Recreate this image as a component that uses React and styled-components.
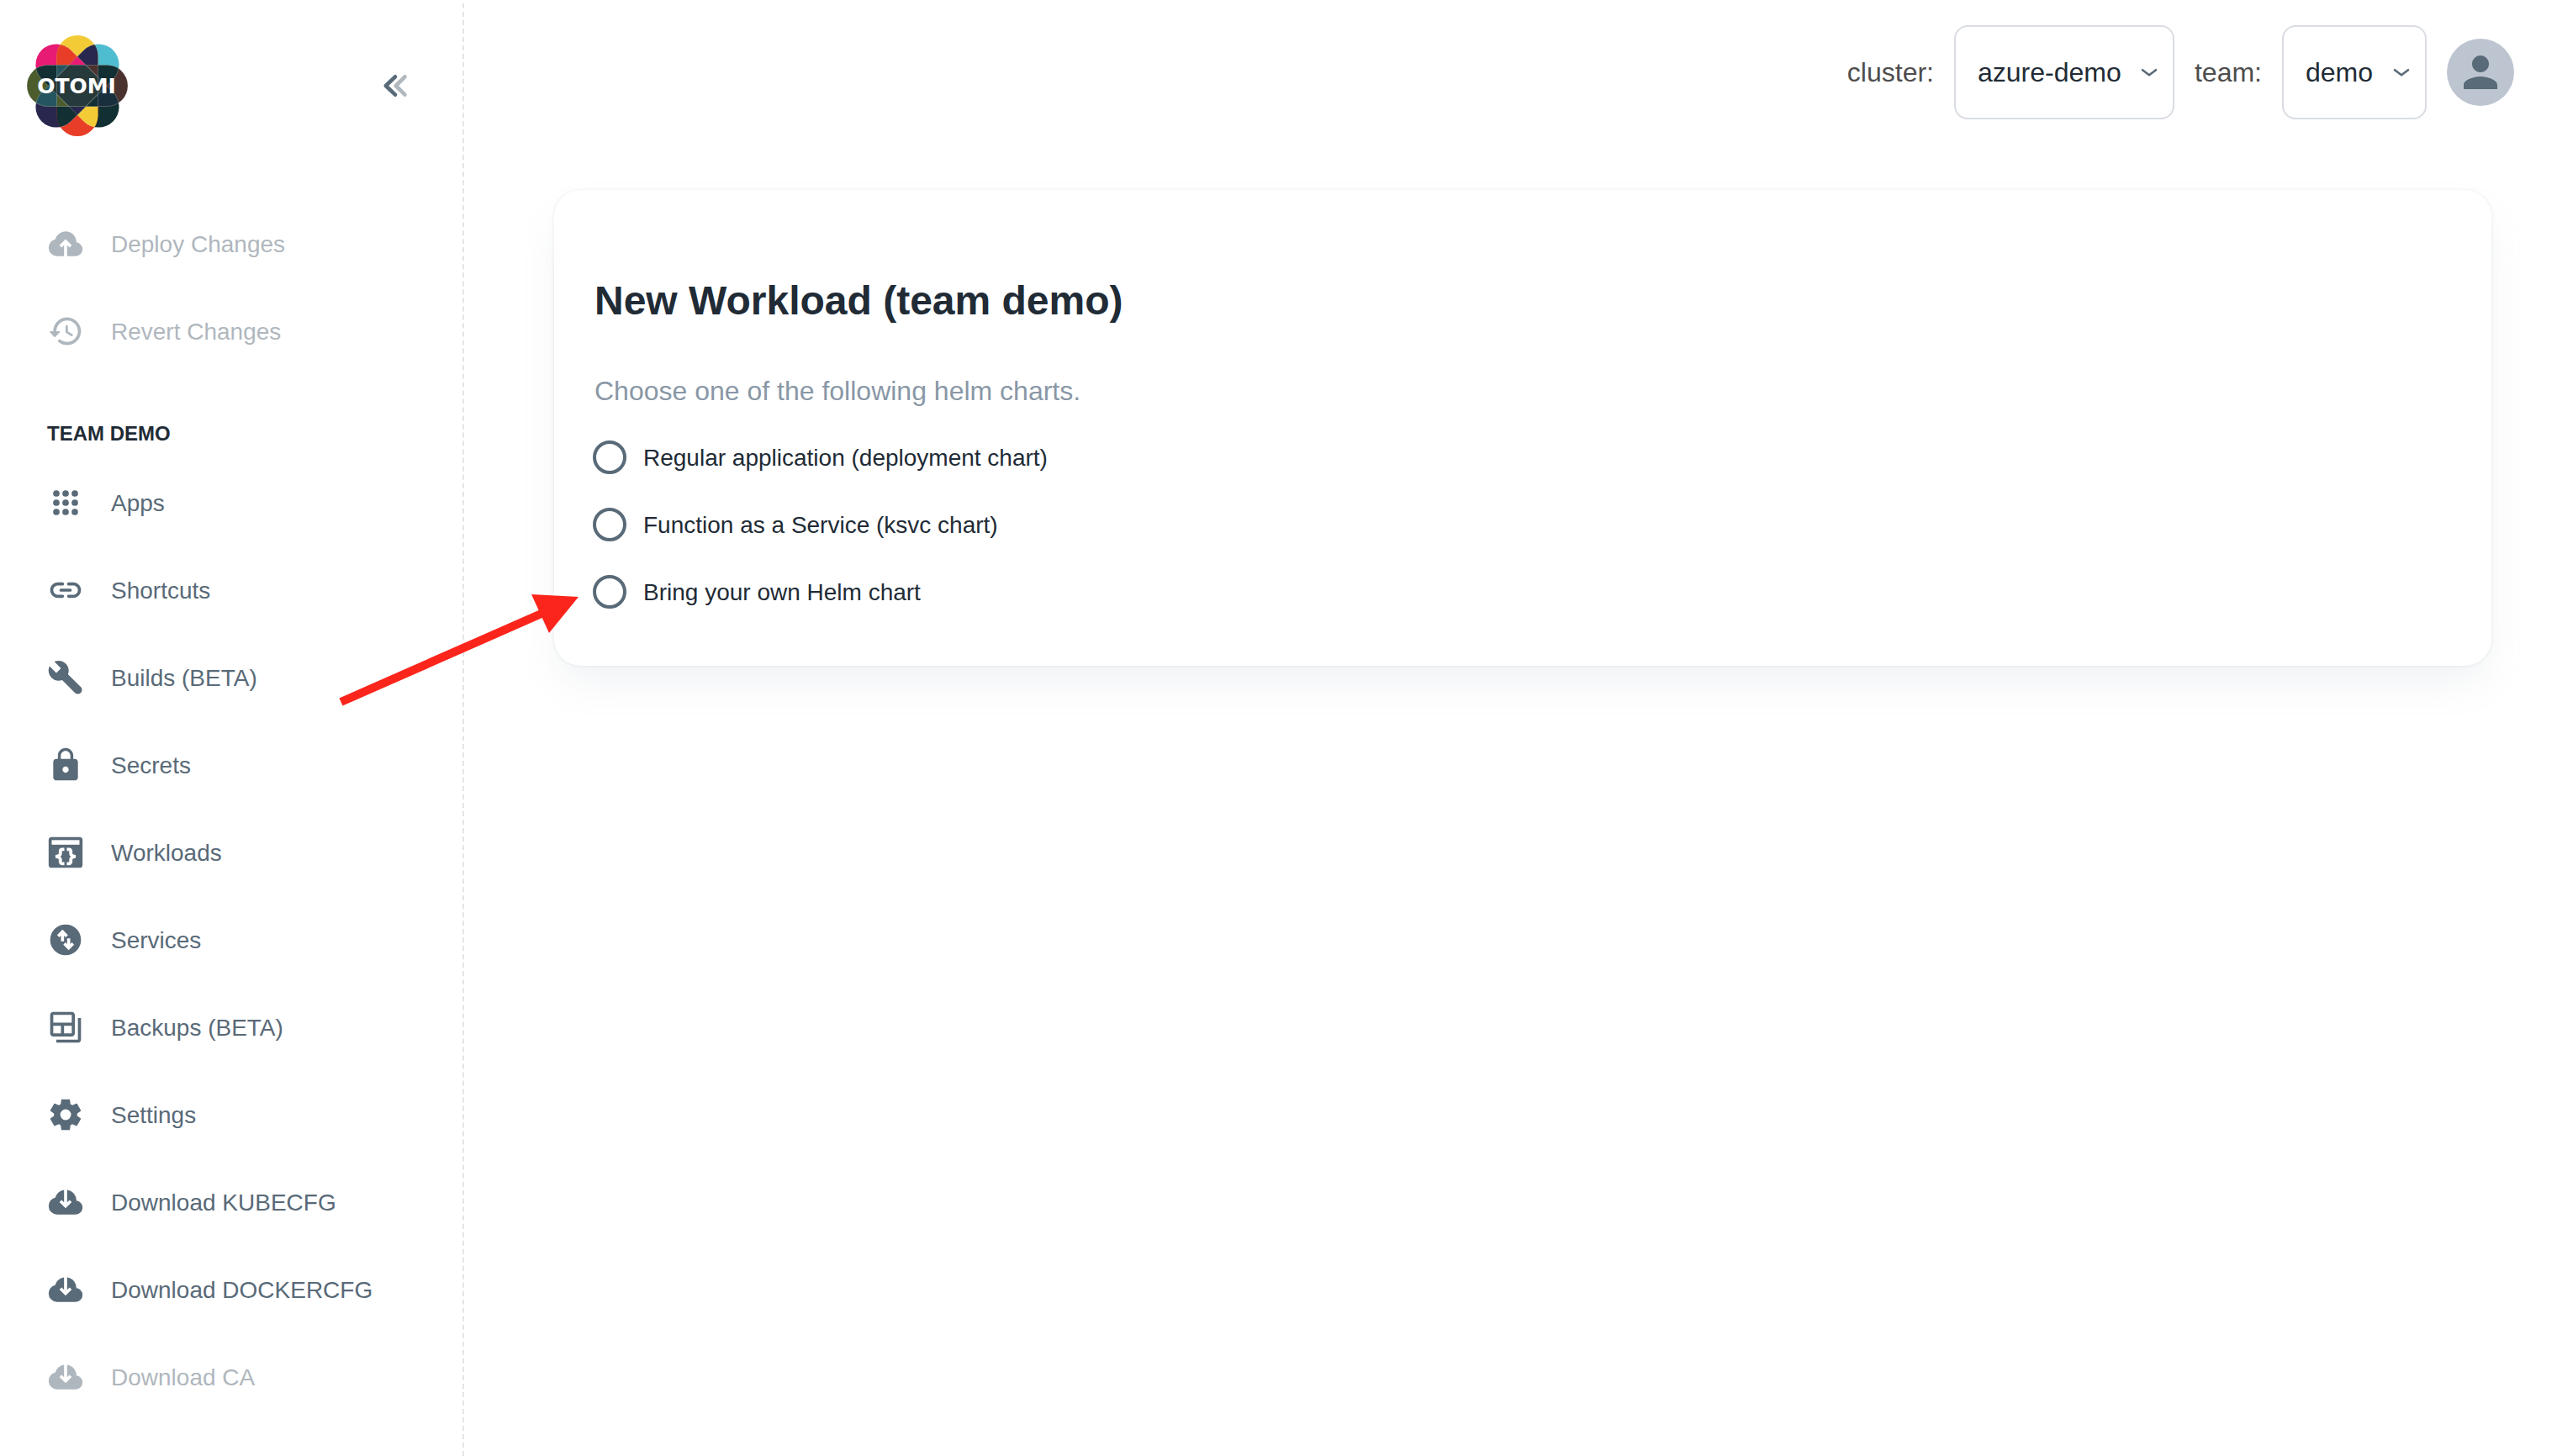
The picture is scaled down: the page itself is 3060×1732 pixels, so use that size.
import React from 'react';
import styled, { createGlobalStyle, css } from 'styled-components';
import { MdLock, MdPerson } from 'react-icons/md';

const colors = {
  primary: '#212b36',
  secondary: '#596a78',
  muted: '#8997a6',
  header: '#4d4d4d',
  border: '#d9dde3',
  avatar: '#bdc5d0',
  arrow: '#fc251c',
};

const GlobalStyle = createGlobalStyle`
  *, *::before, *::after { box-sizing: border-box; }
  body {
    margin: 0;
    background: #fff;
    color: ${colors.primary};
    font-family: "Liberation Sans", Arial, Helvetica, sans-serif;
    font-size: 28px;
  }
  button, select, input { font: inherit; margin: 0; }
`;

const Page = styled.div`
  position: relative;
  display: flex;
  min-height: 100vh;
`;

/* ---------- sidebar ---------- */

const Sidebar = styled.aside`
  flex: 0 0 552px;
  margin-top: 4px;
  padding: 38px 32px 32px;
  border-right: 2px dashed #e2e5e9;
`;

const Brand = styled.div`
  display: flex;
  align-items: center;
  justify-content: space-between;
  padding-right: 24px;
  margin-bottom: 80px;
`;

const LogoLink = styled.a`
  display: block;
  height: 120px;
`;

const CollapseButton = styled.button`
  display: flex;
  width: 48px;
  height: 48px;
  padding: 0;
  border: 0;
  background: none;
  color: ${colors.secondary};
  cursor: pointer;
`;

const NavList = styled.ul`
  display: flex;
  flex-direction: column;
  gap: 8px;
  margin: 0;
  padding: 0;
  list-style: none;
`;

const NavTitle = styled.h2`
  margin: 0;
  padding: 56px 24px 16px;
  font-size: 24px;
  line-height: 36px;
  font-weight: 700;
  text-transform: uppercase;
`;

const navItem = css`
  display: flex;
  align-items: center;
  gap: 32px;
  width: 100%;
  height: 96px;
  padding: 0 24px;
  border: 0;
  border-radius: 16px;
  background: none;
  color: ${colors.secondary};
  text-align: left;
  text-decoration: none;
  white-space: nowrap;
`;

const NavLink = styled.a`
  ${navItem}
`;

const NavButton = styled.button`
  ${navItem}
  &:disabled { opacity: 0.48; }
`;

const NavIcon = styled.span`
  display: flex;
  flex: none;
  svg { width: 44px; height: 44px; }
`;

const ItemText = styled.span`
  padding-top: 2px;
  font-size: 28px;
  line-height: 44px;
`;

/* ---------- header ---------- */

const Main = styled.div`
  flex: 1;
  min-width: 0;
`;

const Header = styled.header`
  display: flex;
  align-items: center;
  justify-content: flex-end;
  gap: 24px;
  padding: 30px 70px 0 0;
`;

const HeaderLabel = styled.label`
  color: ${colors.header};
  font-size: 32px;
  line-height: 48px;
`;

const SelectBox = styled.div`
  display: grid;
  align-items: center;
  > * { grid-area: 1 / 1; }
  > svg {
    justify-self: end;
    margin-right: 20px;
    pointer-events: none;
  }
`;

const Select = styled.select`
  appearance: none;
  height: 112px;
  padding: 0 61px 0 26px;
  border: 2px solid ${colors.border};
  border-radius: 16px;
  background: transparent;
  color: ${colors.primary};
  font-size: 32px;
`;

const Avatar = styled.button`
  display: flex;
  align-items: center;
  justify-content: center;
  width: 80px;
  height: 80px;
  padding: 0;
  border: 0;
  border-radius: 50%;
  background: ${colors.avatar};
  color: ${colors.secondary};
  svg { width: 60px; height: 60px; }
`;

/* ---------- content ---------- */

const Container = styled.main`
  max-width: 2410px;
  margin: 0 auto;
  padding: 84px 48px 48px 58px;
`;

const Card = styled.section`
  padding: 96px 48px 48px;
  border-radius: 32px;
  background: #fff;
  box-shadow: 0 0 4px rgba(145, 158, 171, 0.2), 0 24px 48px -8px rgba(145, 158, 171, 0.14);
`;

const Title = styled.h1`
  margin: 0 0 48px;
  font-size: 48px;
  line-height: 72px;
  font-weight: 700;
`;

const Choices = styled.fieldset`
  margin: 0;
  padding: 0;
  border: 0;
`;

const Legend = styled.legend`
  margin-bottom: 16px;
  padding: 0;
  color: ${colors.muted};
  font-size: 32px;
  line-height: 46px;
`;

const Choice = styled.label`
  display: flex;
  align-items: center;
  gap: 20px;
  width: max-content;
  height: 80px;
  margin-left: -2px;
`;

const Radio = styled.input`
  appearance: none;
  flex: none;
  width: 40px;
  height: 40px;
  border: 4px solid ${colors.secondary};
  border-radius: 50%;
  background: #fff;
  &:checked { background: radial-gradient(${colors.secondary} 10px, #fff 11px); }
`;

/* Red pointer laid over the sidebar edge and the card */
const Pointer = styled.svg`
  position: absolute;
  left: 400px;
  top: 704px;
  width: 292px;
  height: 140px;
  pointer-events: none;
`;

/* ---------- drawings ---------- */

const Pill = ({ turn = 0, ...rest }) => (
  <rect x="35.5" y="0" width="49" height="120" rx="24.5" transform={`rotate(${turn} 60 60)`} {...rest} />
);

const TURNS = { v: 0, a: -45, b: 45, h: 90 };

const Overlap = ({ of, first, second, sideways }) => {
  const halves = sideways ? (
    <>
      <rect width="60" height="120" fill={first} />
      <rect x="60" width="60" height="120" fill={second} />
    </>
  ) : (
    <>
      <rect width="120" height="60" fill={first} />
      <rect y="60" width="120" height="60" fill={second} />
    </>
  );
  return [...of].reduce((inner, key) => <g clipPath={`url(#pill-${key})`}>{inner}</g>, halves);
};

const Logo = () => (
  <svg width="120" height="120" viewBox="0 0 120 120" role="img" aria-label="Otomi">
    <defs>
      {Object.entries(TURNS).map(([key, turn]) => (
        <clipPath id={`pill-${key}`} key={key}>
          <Pill turn={turn} />
        </clipPath>
      ))}
    </defs>
    <Overlap of="a" first="#e71b73" second="#122f33" />
    <Overlap of="b" first="#4fbdd0" second="#29274d" />
    <Overlap of="v" first="#f3cb37" second="#e83e28" />
    <Overlap of="va" first="#e83e28" second="#f3cb37" />
    <Overlap of="vb" first="#29274d" second="#122f33" />
    <Overlap of="vab" first="#e71b73" second="#29274d" />
    <Overlap of="h" first="#4c5c2d" second="#4a332f" sideways />
    <Overlap of="ha" first="#122f33" second="#1a2f3e" />
    <Overlap of="hb" first="#122f33" second="#255660" />
    <Overlap of="hva" first="#255660" second="#122f33" />
    <Overlap of="hvb" first="#4a332f" second="#4c5c2d" />
    <Overlap of="hab" first="#26393b" second="#26393b" />
    <g fill="none" stroke="#fff" strokeOpacity="0.3" strokeWidth="0.7">
      <Pill turn={90} />
      <g clipPath="url(#pill-h)">
        <Pill />
        <Pill turn={45} />
        <Pill turn={-45} />
      </g>
      <g clipPath="url(#pill-v)">
        <Pill turn={45} />
        <Pill turn={-45} />
      </g>
    </g>
    <text x="59" y="69" textAnchor="middle" fill="#fff" fontFamily="'DejaVu Sans', sans-serif" fontWeight="700" fontSize="25">
      OTOMI
    </text>
  </svg>
);

const CollapseIcon = () => (
  <svg width="48" height="48" viewBox="0 0 48 48" fill="none" stroke="currentColor" strokeWidth="4.6" strokeLinecap="round" strokeLinejoin="round" aria-hidden="true">
    <path d="M24 13.300 12.800 24 24 34.700" />
    <path d="M35.500 13.300 24.800 24 35.500 34.700" opacity="0.48" />
  </svg>
);

const ChevronIcon = () => (
  <svg width="20" height="12" viewBox="0 0 20 12" fill="none" stroke={colors.secondary} strokeWidth="2.600" strokeLinecap="round" strokeLinejoin="round" aria-hidden="true">
    <path d="M2 3.200 10 9.200 18 3.200" />
  </svg>
);

const Glyph = ({ d, children }) => (
  <svg viewBox="0 0 24 24" fill="currentColor" aria-hidden="true">
    {d && <path d={d} />}
    {children}
  </svg>
);

const PATHS = {
  upload:
    'M11 20H6.5q-2.275 0-3.887-1.575T1 14.575q0-1.95 1.175-3.475T5.25 9.15q.625-2.3 2.5-3.725T12 4q2.925 0 4.963 2.038T19 11q1.725.2 2.863 1.488T23 15.5q0 1.875-1.312 3.188T18.5 20H13v-7.15l1.6 1.55L16 13l-4-4l-4 4l1.4 1.4l1.6-1.55z',
  download:
    'M6.5 20q-2.275 0-3.887-1.575T1 14.575q0-1.95 1.175-3.475T5.25 9.15q.575-2.025 2.138-3.4T11 4.1v8.05l-1.6-1.55L8 12l4 4l4-4l-1.4-1.4l-1.6 1.55V4.1q2.575.35 4.288 2.313T19 11q1.725.2 2.863 1.488T23 15.5q0 1.875-1.312 3.188T18.5 20z',
  history:
    'M13.26 3C8.17 2.86 4 6.95 4 12H2.21c-.45 0-.67.54-.35.85l2.79 2.8c.2.2.51.2.71 0l2.79-2.8a.5.5 0 0 0-.36-.85H6c0-3.9 3.18-7.05 7.1-7c3.72.05 6.85 3.18 6.9 6.9c.05 3.91-3.1 7.1-7 7.1c-1.61 0-3.1-.55-4.28-1.48a.994.994 0 0 0-1.32.08c-.42.42-.39 1.13.08 1.49A8.858 8.858 0 0 0 13 21c5.05 0 9.14-4.17 9-9.26c-.13-4.69-4.05-8.61-8.74-8.74m-.51 5c-.41 0-.75.34-.75.75v3.68c0 .35.19.68.49.86l3.12 1.85c.36.21.82.09 1.03-.26c.21-.36.09-.82-.26-1.03l-2.88-1.71v-3.4c0-.4-.34-.74-.75-.74',
  link:
    'M17 7h-3c-.55 0-1 .45-1 1s.45 1 1 1h3c1.65 0 3 1.35 3 3s-1.35 3-3 3h-3c-.55 0-1 .45-1 1s.45 1 1 1h3c2.76 0 5-2.24 5-5s-2.24-5-5-5m-9 5c0 .55.45 1 1 1h6c.55 0 1-.45 1-1s-.45-1-1-1H9c-.55 0-1 .45-1 1m2 3H7c-1.65 0-3-1.35-3-3s1.35-3 3-3h3c.55 0 1-.45 1-1s-.45-1-1-1H7c-2.76 0-5 2.24-5 5s2.24 5 5 5h3c.55 0 1-.45 1-1s-.45-1-1-1',
  build:
    'M21.9 18.200l-8.300-8.300c.9-2.300.4-5-1.500-6.900-2-2-5-2.400-7.400-1.300L9 6 6 9 1.600 4.700C.4 7.100.9 10.100 2.900 12.100c1.900 1.900 4.600 2.400 6.900 1.500l8.300 8.300a2.650 2.650 0 0 0 3.800-3.700z',
  backup:
    'M20 6v14H6v2h14c1.100 0 2-.9 2-2V6zm-4-4H4c-1.100 0-2 .9-2 2v12c0 1.100.9 2 2 2h12c1.100 0 2-.9 2-2V4c0-1.100-.9-2-2-2M9 16H4v-5h5zm7 0h-5v-5h5zm0-7H4V4h12z',
  settings:
    'm9.25 22l-.4-3.2q-.325-.125-.612-.3t-.563-.375L4.7 19.375l-2.75-4.75l2.575-1.95Q4.500 12.500 4.500 12.338v-.675q0-.163.025-.338L1.950 9.375l2.750-4.750l2.975 1.250q.275-.2.575-.375t.6-.3l.4-3.200h5.500l.4 3.200q.325.125.613.3t.562.375l2.975-1.250l2.750 4.750l-2.575 1.950q.025.175.025.338v.674q0 .163-.05.338l2.575 1.950l-2.750 4.750l-2.950-1.250q-.275.2-.575.375t-.6.3l-.4 3.200zm2.800-6.500q1.450 0 2.475-1.025T15.550 12t-1.025-2.475T12.050 8.500q-1.475 0-2.488 1.025T8.550 12t1.013 2.475T12.050 15.500',
};

const AppsIcon = () => (
  <Glyph>
    {[6, 12, 18].map((y) => [6, 12, 18].map((x) => <circle key={`${x}-${y}`} cx={x} cy={y} r="2.100" />))}
  </Glyph>
);

const WorkloadsIcon = () => (
  <Glyph>
    <rect x="1" y="2" width="22" height="20" rx="2" />
    <rect x="3" y="4" width="18" height="3" fill="#fff" />
    <g fill="none" stroke="#fff" strokeWidth="2.100">
      <path d="M11.200 10H9.800a1.200 1.200 0 0 0-1.200 1.200v1.600q0 1.300-3 1.850 3 .55 3 1.850v1.600a1.200 1.200 0 0 0 1.200 1.200H11.200" />
      <path d="M12.800 10H14.200a1.200 1.200 0 0 1 1.200 1.200v1.600q0 1.300 3 1.850-3 .55-3 1.850v1.600a1.200 1.200 0 0 1-1.200 1.200H12.800" />
    </g>
  </Glyph>
);

const ServicesIcon = () => (
  <Glyph>
    <circle cx="12" cy="12" r="10" />
    <g fill="none" stroke="#fff" strokeWidth="2">
      <path d="M10 13V7M7.200 9.600 10 6.800l2.800 2.800" />
      <path d="M14 11v6M11.200 14.400 14 17.200l2.800-2.800" />
    </g>
  </Glyph>
);

const ACTIONS = [
  { label: 'Deploy Changes', icon: <Glyph d={PATHS.upload} /> },
  { label: 'Revert Changes', icon: <Glyph d={PATHS.history} /> },
];

const LINKS = [
  { label: 'Apps', icon: <AppsIcon /> },
  { label: 'Shortcuts', icon: <Glyph d={PATHS.link} /> },
  { label: 'Builds (BETA)', icon: <Glyph d={PATHS.build} /> },
  { label: 'Secrets', icon: <MdLock aria-hidden="true" /> },
  { label: 'Workloads', icon: <WorkloadsIcon /> },
  { label: 'Services', icon: <ServicesIcon /> },
  { label: 'Backups (BETA)', icon: <Glyph d={PATHS.backup} /> },
  { label: 'Settings', icon: <Glyph d={PATHS.settings} /> },
  { label: 'Download KUBECFG', icon: <Glyph d={PATHS.download} /> },
  { label: 'Download DOCKERCFG', icon: <Glyph d={PATHS.download} /> },
  { label: 'Download CA', icon: <Glyph d={PATHS.download} />, disabled: true },
];

const CHARTS = [
  { value: 'deployment', label: 'Regular application (deployment chart)' },
  { value: 'ksvc', label: 'Function as a Service (ksvc chart)' },
  { value: 'custom', label: 'Bring your own Helm chart' },
];

const NavEntry = ({ icon, label, disabled }) => (
  <li>
    {disabled ? (
      <NavButton type="button" disabled>
        <NavIcon>{icon}</NavIcon>
        <ItemText>{label}</ItemText>
      </NavButton>
    ) : (
      <NavLink href="#">
        <NavIcon>{icon}</NavIcon>
        <ItemText>{label}</ItemText>
      </NavLink>
    )}
  </li>
);

const HeaderSelect = ({ id, label, value }) => (
  <>
    <HeaderLabel htmlFor={id}>{label}</HeaderLabel>
    <SelectBox>
      <Select id={id} defaultValue={value}>
        <option value={value}>{value}</option>
      </Select>
      <ChevronIcon />
    </SelectBox>
  </>
);

export default function App() {
  return (
    <>
      <GlobalStyle />
      <Page>
        <Sidebar>
          <Brand>
            <LogoLink href="#">
              <Logo />
            </LogoLink>
            <CollapseButton type="button" aria-label="Collapse menu">
              <CollapseIcon />
            </CollapseButton>
          </Brand>
          <nav>
            <NavList>
              {ACTIONS.map((item) => (
                <NavEntry key={item.label} {...item} disabled />
              ))}
            </NavList>
            <NavTitle>Team demo</NavTitle>
            <NavList>
              {LINKS.map((item) => (
                <NavEntry key={item.label} {...item} />
              ))}
            </NavList>
          </nav>
        </Sidebar>
        <Main>
          <Header>
            <HeaderSelect id="cluster" label="cluster:" value="azure-demo" />
            <HeaderSelect id="team" label="team:" value="demo" />
            <Avatar type="button" aria-label="Account">
              <MdPerson aria-hidden="true" />
            </Avatar>
          </Header>
          <Container>
            <Card>
              <Title>New Workload (team demo)</Title>
              <Choices>
                <Legend>Choose one of the following helm charts.</Legend>
                {CHARTS.map(({ value, label }) => (
                  <Choice key={value}>
                    <Radio type="radio" name="chart" value={value} />
                    <ItemText>{label}</ItemText>
                  </Choice>
                ))}
              </Choices>
            </Card>
          </Container>
        </Main>
        <Pointer viewBox="400 704 292 140" aria-hidden="true">
          <path d="M405.500 835 646 729" stroke={colors.arrow} strokeWidth="10" />
          <path d="M632 707 688 710 653 753z" fill={colors.arrow} />
        </Pointer>
      </Page>
    </>
  );
}
